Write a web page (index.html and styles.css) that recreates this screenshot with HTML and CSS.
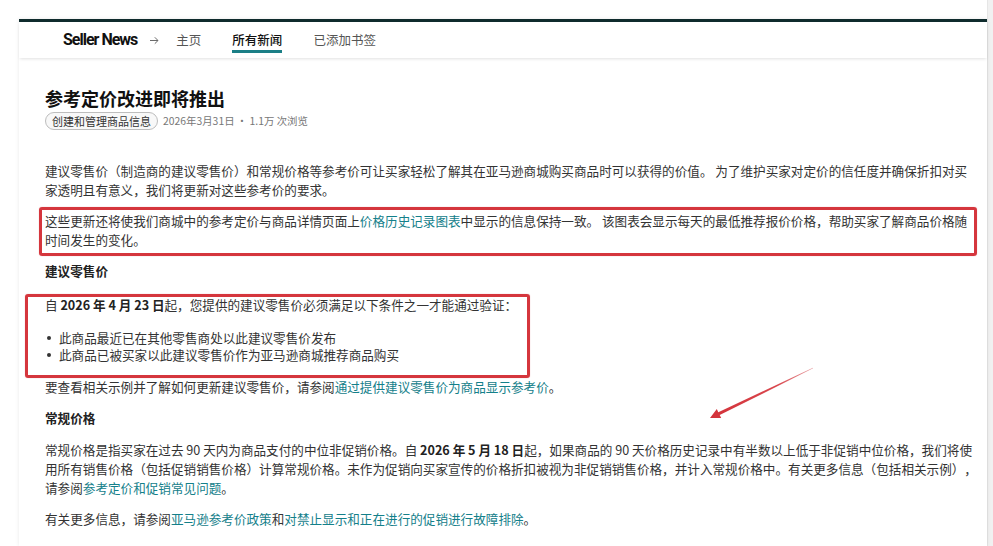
FILE: index.html
```html
<!DOCTYPE html>
<html lang="zh-CN">
<head>
<meta charset="utf-8">
<title>参考定价改进即将推出</title>
<link rel="stylesheet" href="styles.css">
</head>
<body>
<div class="page">
  <div class="frame">
    <header class="topnav">
      <span class="brand">Seller News</span>
      <svg class="crumb-arrow" width="10" height="18" viewBox="0 0 10 18" aria-hidden="true">
        <path d="M1 9.5H9M5.8 6.3L9 9.5L5.8 12.7" fill="none" stroke="#6b6b6b" stroke-width="1"/>
      </svg>
      <a class="nav-link" href="#">主页</a>
      <a class="nav-link active" href="#">所有新闻</a>
      <a class="nav-link" href="#">已添加书签</a>
    </header>

    <main class="article">
      <h1 class="title">参考定价改进即将推出</h1>
      <div class="meta">
        <span class="pill">创建和管理商品信息</span>
        <span class="meta-text">2026年3月31日 · 1.1万 次浏览</span>
      </div>

      <p class="lead">建议零售价（制造商的建议零售价）和常规价格等参考价可让买家轻松了解其在亚马逊商城购买商品时可以获得的价值。 为了维护买家对定价的信任度并确保折扣对买家透明且有意义，我们将更新对这些参考价的要求。</p>

      <p class="mark mark-wide">这些更新还将使我们商城中的参考定价与商品详情页面上<a href="#">价格历史记录图表</a>中显示的信息保持一致。 该图表会显示每天的最低推荐报价价格，帮助买家了解商品价格随时间发生的变化。</p>

      <h2 class="sub">建议零售价</h2>

      <div class="mark mark-list">
        <p class="cond">自 <b>2026 年 4 月 23 日</b>起，您提供的建议零售价必须满足以下条件之一才能通过验证：</p>
        <ul class="bullets">
          <li>此商品最近已在其他零售商处以此建议零售价发布</li>
          <li>此商品已被买家以此建议零售价作为亚马逊商城推荐商品购买</li>
        </ul>
      </div>

      <p>要查看相关示例并了解如何更新建议零售价，请参阅<a href="#">通过提供建议零售价为商品显示参考价</a>。</p>

      <h2 class="sub sub-tight">常规价格</h2>

      <p>常规价格是指买家在过去 90 天内为商品支付的中位非促销价格。自 <b>2026 年 5 月 18 日</b>起，如果商品的 90 天价格历史记录中有半数以上低于非促销中位价格，我们将使用所有销售价格（包括促销销售价格）计算常规价格。未作为促销向买家宣传的价格折扣被视为非促销销售价格，并计入常规价格中。有关更多信息（包括相关示例），请参阅<a href="#">参考定价和促销常见问题</a>。</p>

      <p>有关更多信息，请参阅<a href="#">亚马逊参考价政策</a>和<a href="#">对禁止显示和正在进行的促销进行故障排除</a>。</p>
    </main>

    <svg class="annot-arrow" width="116" height="62" viewBox="0 0 116 62" aria-hidden="true">
      <defs>
        <linearGradient id="arrowFade" x1="109" y1="5" x2="6" y2="55" gradientUnits="userSpaceOnUse">
          <stop offset="0" stop-color="#e7a0a3"/>
          <stop offset="0.35" stop-color="#d9474d"/>
          <stop offset="1" stop-color="#d3323a"/>
        </linearGradient>
      </defs>
      <polygon points="6,55 17.2,55.1 15.7,52.1 109.1,5.3 108.9,4.7 14.3,49.2 12.8,46.1" fill="url(#arrowFade)"/>
    </svg>
  </div>
  <div class="scrollbar"></div>
</div>
</body>
</html>
```
FILE: styles.css
```css
* {
  box-sizing: border-box;
}

html,
body {
  margin: 0;
  background: #ffffff;
}

body {
  font-family: "Noto Sans CJK SC", "Noto Sans", sans-serif;
  color: #333333;
  text-spacing-trim: space-all;
}

.page {
  display: flex;
  height: 546px;
  overflow: hidden;
}

.frame {
  position: relative;
  width: 968px;
  margin: 19px 0 0 19px;
  background: #ffffff;
  border-top: 3px solid #0f2b2d;
  box-shadow: 0 0 4px rgba(0, 0, 0, 0.09);
}

.scrollbar {
  width: 6px;
  margin-left: auto;
  background: #f1f1f1;
  border-left: 1px solid #e6e6e6;
}

/* ---------- top navigation ---------- */
.topnav {
  position: relative;
  z-index: 1;
  display: flex;
  align-items: flex-start;
  height: 36px;
  padding: 9px 0 0 44px;
  box-shadow: 0 2px 3px -1px rgba(0, 0, 0, 0.12);
}

.brand {
  font-family: Roboto, "Liberation Sans", sans-serif;
  font-weight: 700;
  font-size: 16px;
  line-height: 18px;
  letter-spacing: -1px;
  color: #111111;
}

.crumb-arrow {
  display: block;
  margin: 0 17px 0 12px;
}

.nav-link {
  margin-right: 31px;
  padding-bottom: 1px;
  border-bottom: 3px solid transparent;
  font-size: 12.5px;
  line-height: 18px;
  color: #555555;
  text-decoration: none;
}

.nav-link.active {
  color: #111111;
  font-weight: 500;
  border-bottom-color: #1b7f86;
}

/* ---------- article ---------- */
.article {
  padding: 28px 8.7px 0 26px;
  font-size: 12.6px;
  line-height: 19px;
}

.title {
  margin: 0;
  font-size: 18px;
  line-height: 24px;
  font-weight: 700;
  color: #111111;
}

.meta {
  display: flex;
  align-items: center;
  height: 18px;
  margin: 2px 0 31px;
}

.pill {
  padding: 0 6px;
  border: 1px solid #bdbdbd;
  border-radius: 9px;
  background: #f8f8f8;
  font-size: 11px;
  line-height: 16px;
  color: #333333;
}

.meta-text {
  margin-left: 5px;
  font-size: 10.4px;
  line-height: 16px;
  color: #777777;
}

.article p {
  margin: 0 0 12px;
}

.article a {
  color: #14808a;
  text-decoration: none;
}

.article b {
  font-weight: 700;
  color: #222222;
}

.sub {
  margin: 0 0 15px;
  font-size: 12.6px;
  line-height: 19px;
  font-weight: 700;
  color: #222222;
}

.sub-tight {
  margin-bottom: 13px;
}

.bullets {
  margin: 0;
  padding: 0;
  list-style: none;
}

.bullets li {
  display: flex;
  align-items: flex-start;
  line-height: 17px;
}

.bullets li::before {
  content: "";
  flex: none;
  width: 4px;
  height: 4px;
  margin: 7px 8px 0 2px;
  border-radius: 50%;
  background: #333333;
}

.article .cond {
  margin-bottom: 15px;
}

/* ---------- red annotation frames ---------- */
.mark {
  position: relative;
}

.mark::after {
  content: "";
  position: absolute;
  border: 3px solid #d5363d;
  border-radius: 3px;
  box-shadow: 0 0 1px rgba(213, 54, 61, 0.5);
  pointer-events: none;
}

.mark-wide::after {
  top: -4px;
  bottom: -7px;
  left: -6px;
  right: 1.3px;
}

.mark-list {
  width: fit-content;
  margin-bottom: 14px;
}

.mark-list::after {
  top: -1px;
  bottom: -15px;
  left: -20px;
  right: -13px;
}

.annot-arrow {
  position: absolute;
  left: 685px;
  top: 341px;
}
```
